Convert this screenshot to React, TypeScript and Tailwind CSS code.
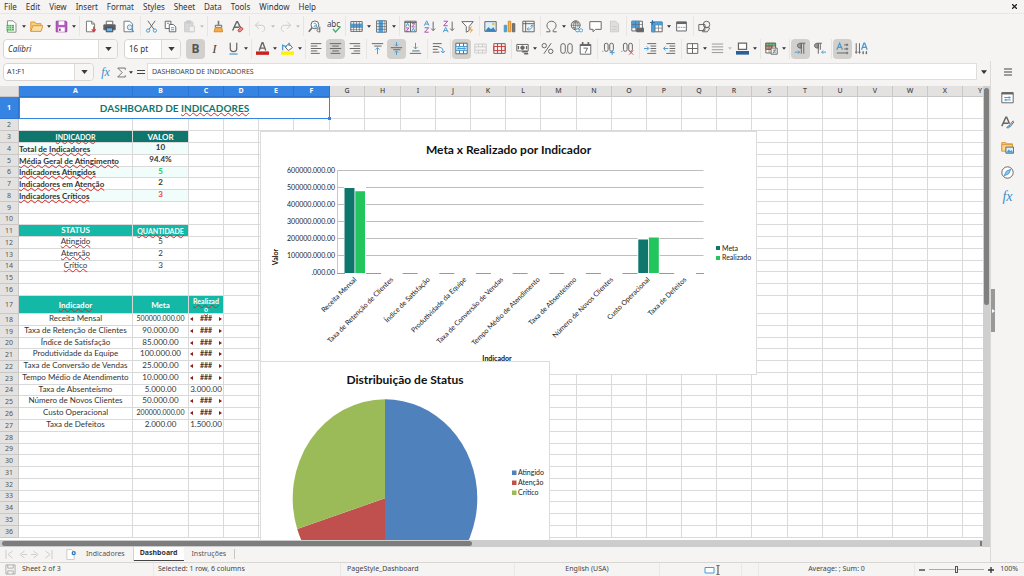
import React from "react";

type Kids = { children?: React.ReactNode };

/* ---------- shared palette for the icons ---------- */
const G = "#666666";
const B = "#4a9ad2";
const L = "#cccccc";

function Ic({ children }: Kids) {
  return (
    <svg viewBox="0 0 16 16" className="size-[13px] shrink-0" fill="none" stroke={G} strokeWidth="1.2" aria-hidden="true">
      {children}
    </svg>
  );
}

function Caret({ dim = false }: { dim?: boolean }) {
  return (
    <svg viewBox="0 0 6 4" className="h-[3px] w-1" aria-hidden="true">
      <path d="M0 0h6L3 4z" fill={dim ? "#c0c0c0" : "#333333"} />
    </svg>
  );
}

function Sep() {
  return (
    <div className="flex h-5 w-1 shrink-0 justify-center">
      <div className="w-px bg-[#e6e5e3]" />
    </div>
  );
}

type ToolProps = { label: string; on?: boolean; menu?: boolean; dim?: boolean; children: React.ReactNode };

function Tool({ label, on, menu, dim, children }: ToolProps) {
  return (
    <>
      <button
        type="button"
        aria-label={label}
        className={"flex h-5 w-[19px] shrink-0 items-center justify-center rounded-sm " + (on ? "bg-[#d2d0cc]" : "")}
      >
        {children}
      </button>
      {menu && (
        <button type="button" aria-label={label + " options"} className="flex h-5 w-1.5 shrink-0 items-center justify-center">
          <Caret dim={dim} />
        </button>
      )}
    </>
  );
}

function ComboButton({ label }: { label: string }) {
  return (
    <button type="button" aria-label={label} className="flex w-[19px] shrink-0 items-center justify-center border-l border-[#dddbd8] bg-[#f7f6f5]">
      <svg viewBox="0 0 8 5" className="h-1 w-[7px]" aria-hidden="true">
        <path d="M0 0h8L4 5z" fill="#3a3a3a" />
      </svg>
    </button>
  );
}

const sheetFrame = (c = G) => <path d="M2 2.5h12v11H2z" fill="#fff" stroke={c} />;

function MainToolbar() {
  return (
    <div role="toolbar" aria-label="Standard" className="flex h-6 shrink-0 items-center pl-0.5">
      <Tool label="New" menu>
        <Ic>
          <path d="M3 1h7l3.5 3.5V15H3z" fill="#fff" stroke="#8a8a8a" />
          <path d="M2 6h9v7H2z" fill="#3fae49" stroke="none" />
          <path d="M2 8.3h9M2 10.6h9M5 6v7M8 6v7" stroke="#d6f2d8" strokeWidth=".8" />
        </Ic>
      </Tool>
      <Tool label="Open" menu>
        <Ic>
          <path d="M1 14V2.5h5l1.5 2h6V7" fill="#f7cf83" stroke="#e0962f" />
          <path d="M1 14 3.5 7H16l-2.5 7z" fill="#fbdfa6" stroke="#e0962f" />
        </Ic>
      </Tool>
      <Tool label="Save" menu>
        <Ic>
          <path d="M1.5 1.5h12l1 1v12h-13z" fill="#b45cc4" stroke="#97409f" />
          <path d="M4.5 1.5h7V6h-7z" fill="#fff" stroke="none" />
          <path d="M4 9h8v5.5H4z" fill="#fff" stroke="none" />
          <path d="M6 10.5v3" stroke="#97409f" strokeWidth="2" />
        </Ic>
      </Tool>
      <Sep />
      <Tool label="Export as PDF">
        <Ic>
          <path d="M3 1.5h6.5l3.5 3.5v9.5H3z" fill="#fff" stroke="#777" />
          <path d="M9.5 1.5V5H13" stroke="#777" />
          <path d="M12 8v6m-2.5-2.5L12 14l2.5-2.5" stroke="#d23c3c" strokeWidth="1.5" />
        </Ic>
      </Tool>
      <Tool label="Print">
        <Ic>
          <path d="M4 1.5h8V6H4z" fill="#fff" />
          <path d="M1 6h14v6H1z" fill="#5a5f66" />
          <path d="M4 9.5h8v5H4z" fill="#6db3e6" stroke="#3c4650" />
        </Ic>
      </Tool>
      <Tool label="Print preview">
        <Ic>
          <path d="M2.5 1.5h7L13 5v9.5H2.5z" fill="#fff" stroke="#777" />
          <circle cx="9.5" cy="9" r="3" fill="#d9effc" stroke={B} />
          <path d="m11.5 11.5 3 3" stroke={B} strokeWidth="1.6" />
        </Ic>
      </Tool>
      <Sep />
      <Tool label="Cut">
        <Ic>
          <path d="M3.5 1 11 11.5M12.5 1 5 11.5" />
          <circle cx="3.8" cy="13" r="2" stroke={B} />
          <circle cx="12.2" cy="13" r="2" stroke={B} />
        </Ic>
      </Tool>
      <Tool label="Copy">
        <Ic>
          <path d="M1.5 1.5h7v9h-7z" fill="#fff" />
          <path d="M6.5 5.5h5l3 3v6h-8z" fill="#fff" />
          <path d="M8.5 9.5h4M8.5 12h4M3.5 4h3" stroke={B} />
        </Ic>
      </Tool>
      <Tool label="Paste" menu dim>
        <Ic>
          <path d="M2 2.5h10v12H2z" fill="#d8d8d8" stroke={L} />
          <path d="M4.5 1h5v3h-5z" fill={L} stroke={L} />
          <path d="M7.5 7.5H14v7H7.5z" fill="#f2f2f2" stroke={L} />
        </Ic>
      </Tool>
      <Sep />
      <Tool label="Clone formatting">
        <Ic>
          <path d="M8 1v5" stroke="#777" strokeWidth="2" />
          <path d="M4 6.5h8V9H4z" fill="#fff" />
          <path d="M4 9.5h8l1 5H2.5z" fill="#f3ae4c" stroke="#d8862a" />
        </Ic>
      </Tool>
      <Tool label="Clear formatting">
        <Ic>
          <path d="M2 13 7 2h1l4 8M4 9h6" strokeWidth="1.7" />
          <path d="m8.5 12.5 4-4 2.5 2.5-3.5 3.5h-2z" fill="#f28b8b" stroke="#d23c3c" />
        </Ic>
      </Tool>
      <Sep />
      <Tool label="Undo" menu dim>
        <Ic>
          <path d="M6 2 1.5 6.5 6 11M2 6.5h7c6 0 5 7 1 8" stroke={L} />
        </Ic>
      </Tool>
      <Tool label="Redo" menu dim>
        <Ic>
          <path d="m10 2 4.5 4.5L10 11M14 6.5H7c-6 0-5 7-1 8" stroke={L} />
        </Ic>
      </Tool>
      <Sep />
      <Tool label="Find and replace">
        <Ic>
          <circle cx="8.5" cy="6" r="4.8" fill="#fff" />
          <path d="m5 9.5-4 5" strokeWidth="1.8" />
          <path d="M7 4.5c3-1 3.5 0 3.5 4-4 1-4-2 0-2.2" stroke={B} />
          <path d="M14.5 8v7M14.5 11c-5-1-4.5 4.5 0 3.5" />
        </Ic>
      </Tool>
      <Tool label="Spelling">
        <span className="relative -mt-1 text-[8px] leading-[10px] text-[#444]">
          abc
          <svg viewBox="0 0 9 7" className="absolute -right-px -bottom-1 h-[7px] w-[9px]" aria-hidden="true">
            <path d="m1 3 2.5 3 5-5.5" fill="none" stroke="#3faf6a" strokeWidth="1.3" />
          </svg>
        </span>
      </Tool>
      <Sep />
      <Tool label="Row" menu>
        <Ic>
          <path d="M1 2h14v12H1z" fill="#fff" />
          <path d="M1 5h14v4H1z" fill="#4a9fdc" stroke={B} />
          <path d="M1 11.5h14M4.5 2v12M8 2v12M11.5 2v12" strokeWidth=".8" />
        </Ic>
      </Tool>
      <Tool label="Column" menu>
        <Ic>
          <path d="M2 1h12v14H2z" fill="#fff" />
          <path d="M5 1h4.5v14H5z" fill="#4a9fdc" stroke={B} />
          <path d="M2 4.5h12M2 8h12M2 11.5h12M12 1v14" strokeWidth=".8" />
        </Ic>
      </Tool>
      <Sep />
      <Tool label="Sort">
        <Ic>
          <path d="M1 1.5h14v13H1zM8 1.5v13M1 3h14" />
          <path d="m2.5 8 2-4 2 4M9.5 14l2-4 2 4" stroke={B} />
          <path d="M2.5 9.8H6L2.5 14H6M9.7 4.5h3.5l-3.5 4h3.5" stroke="#a64db5" />
        </Ic>
      </Tool>
      <Tool label="Sort ascending">
        <Ic>
          <path d="m1.5 7 3-6 3 6M2.5 5h4" stroke={B} />
          <path d="M2 9.5h5L2 15h5" stroke="#a64db5" />
          <path d="M12.5 2v11M10 10.5l2.5 2.5 2.5-2.5" />
        </Ic>
      </Tool>
      <Tool label="Sort descending">
        <Ic>
          <path d="M2 1.5h5L2 7h5" stroke="#a64db5" />
          <path d="m1.5 15 3-6 3 6M2.5 13h4" stroke={B} />
          <path d="M12.5 2v11M10 10.5l2.5 2.5 2.5-2.5" />
        </Ic>
      </Tool>
      <Tool label="AutoFilter">
        <Ic>
          <path d="M1 2h14l-5 6v5l-3.5 2V8z" fill="#fff" />
          <path d="m13 8-2.5 4H14l-2.5 3.5" stroke="#f0962a" />
        </Ic>
      </Tool>
      <Sep />
      <Tool label="Insert image">
        <Ic>
          <path d="M1 2h14v12H1z" fill="#d8effc" />
          <path d="m1.5 13.5 4-5 3 3 3-2.5 3 4.5z" fill="#3b83b8" stroke="none" />
          <circle cx="11.5" cy="5" r="1.6" fill="#f6b73c" stroke="none" />
        </Ic>
      </Tool>
      <Tool label="Insert chart">
        <Ic>
          <path d="M1.5 6.5h3v8h-3z" fill="#4a9fdc" stroke={B} />
          <path d="M6.5 1.5h3v13h-3z" fill="#f9b74a" stroke="#dc8b20" />
          <path d="M11.5 4.5h3v10h-3z" fill="#777" />
        </Ic>
      </Tool>
      <Tool label="Pivot table">
        <Ic>
          <path d="M1 1.5h14v13H1zM1 4.5h14M4.5 1.5v13" />
          <path d="M6.5 11c5 1 6-1 6-4.5M10.5 8l2-2 2 2M8.5 9l-2 2 2 2" stroke={B} />
        </Ic>
      </Tool>
      <Sep />
      <Tool label="Special character" menu>
        <Ic>
          <path d="M1.5 14.5H6v-2C0 9 2 1.5 8 1.5S16 9 10 12.5v2h4.5" />
        </Ic>
      </Tool>
      <Tool label="Hyperlink">
        <Ic>
          <circle cx="7" cy="6.5" r="5.5" />
          <path d="M1.5 6.5h11M7 1v11M3 3.5h8M3 9.5h4M7 1C3.5 4 3.5 9 7 12M7 1c3 2.5 3.5 5 2.5 8" strokeWidth=".9" />
          <rect x="7" y="11" width="4.5" height="3.5" rx="1.5" stroke={B} fill="#fff" />
          <rect x="11.5" y="11" width="4" height="3.5" rx="1.5" stroke={B} fill="#fff" />
        </Ic>
      </Tool>
      <Tool label="Comment">
        <Ic>
          <path d="M1 2h14v9.5H8L5 14.5v-3H1z" fill="#fff" />
        </Ic>
      </Tool>
      <Tool label="Headers and footers">
        <Ic>
          <path d="M3 1.5h6.5L13 5v9.5H3z" fill="#dedede" stroke={L} />
          <path d="M5 11.5h6M5 8h6" stroke={L} />
        </Ic>
      </Tool>
      <Sep />
      <Tool label="Define print area">
        <Ic>
          <path d="M1 1.5h13v12H1z" fill="#fff" />
          <path d="M1 1.5h9v8H1z" fill="#4a9fdc" stroke={B} />
          <path d="M1 5.5h13M5.5 1.5v12M10 1.5v8" strokeWidth=".8" />
          <path d="M7 10h8.5v4.5H7z" fill="#666" />
        </Ic>
      </Tool>
      <Tool label="Freeze rows and columns" menu>
        <Ic>
          <path d="M2 2.5h13v12H2z" fill="#fff" />
          <path d="M2 2.5h13V6H6v8.5H2z" fill="#4a9fdc" stroke={B} />
          <path d="M6 6v8.5M10.5 6v8.5M6 10h9" strokeWidth=".8" />
          <path d="M3 0v6M0 3h6" stroke="#2f6ea3" />
        </Ic>
      </Tool>
      <Tool label="Split window">
        <Ic>
          {sheetFrame()}
          <path d="M2 3.5h12" strokeWidth="3" />
          <path d="M1 9h14" stroke={B} strokeDasharray="2 1" />
        </Ic>
      </Tool>
      <Sep />
      <Tool label="Show draw functions">
        <Ic>
          <path d="M1 5.5h7.5V13H1z" />
          <circle cx="10.5" cy="5.5" r="4" />
          <path d="m5.5 14.5 3-6 6 1.5-3 4.5z" />
        </Ic>
      </Tool>
    </div>
  );
}

function AlignLines({ x }: { x: [number, number][] }) {
  return (
    <Ic>
      {x.map(([a, b], i) => (
        <path key={i} d={`M${a} ${2 + i * 3}H${b}`} />
      ))}
    </Ic>
  );
}

function FormatToolbar() {
  return (
    <div role="toolbar" aria-label="Formatting" className="mb-0.5 flex h-[21px] shrink-0 items-center pl-[3px]">
      <div className="mr-1.5 flex h-5 w-[115px] overflow-hidden rounded-sm border border-[#d8d6d3] bg-white">
        <input aria-label="Font name" defaultValue="Calibri" className="w-full min-w-0 bg-transparent pl-1 text-[8px] text-[#333] italic outline-none" />
        <ComboButton label="Font list" />
      </div>
      <div className="mr-[5px] flex h-5 w-[57px] overflow-hidden rounded-sm border border-[#d8d6d3] bg-white">
        <input aria-label="Font size" defaultValue="16 pt" className="w-full min-w-0 bg-transparent pl-1 text-[8px] text-[#333] outline-none" />
        <ComboButton label="Font size list" />
      </div>
      <Tool label="Bold" on>
        <span className="text-[12px] leading-none font-bold text-[#555]">B</span>
      </Tool>
      <Tool label="Italic">
        <span className="font-['Liberation_Serif',serif] text-[13px] leading-none text-[#444] italic">I</span>
      </Tool>
      <Tool label="Underline" menu>
        <Ic>
          <path d="M4 1v7c0 5 8 5 8 0V1" strokeWidth="1.5" />
          <path d="M3 14.8h10" stroke={B} strokeWidth="1.5" />
        </Ic>
      </Tool>
      <Sep />
      <Tool label="Font color" menu>
        <Ic>
          <path d="M4 10.5 7.5 1h1L12 10.5M5.5 7.5h5" strokeWidth="1.7" />
          <path d="M0 13.7h16" stroke="#c9211e" strokeWidth="4.2" />
        </Ic>
      </Tool>
      <Tool label="Highlighting" menu>
        <Ic>
          <path d="m5 6 5-4 4 5-5 3.5z" fill="#fff" />
          <path d="M2 10V4l5 2M10 1v4" stroke={B} strokeWidth="1.6" />
          <path d="M0 13.7h16" stroke="#fff200" strokeWidth="4.2" />
        </Ic>
      </Tool>
      <Sep />
      <Tool label="Align left">
        <AlignLines x={[[1, 14], [1, 9], [1, 14], [1, 9], [1, 12]]} />
      </Tool>
      <Tool label="Align center" on>
        <AlignLines x={[[1, 15], [4, 12], [1, 15], [4, 12], [2, 14]]} />
      </Tool>
      <Tool label="Align right">
        <AlignLines x={[[2, 15], [7, 15], [2, 15], [7, 15], [4, 15]]} />
      </Tool>
      <Sep />
      <Tool label="Align top">
        <Ic>
          <path d="M1 2h14M4 5h9" />
          <path d="M8 15V7M5.5 9.5 8 7l2.5 2.5" stroke={B} />
        </Ic>
      </Tool>
      <Tool label="Center vertically" on>
        <Ic>
          <path d="M1 7h14M4 9.5h9" />
          <path d="M8 0v5M6 3l2 2 2-2M8 16v-5M6 13l2-2 2 2" stroke={B} />
        </Ic>
      </Tool>
      <Tool label="Align bottom">
        <Ic>
          <path d="M1 14h14M4 11h9" />
          <path d="M8 1v7.5M5.5 6 8 8.5 10.5 6" stroke={B} />
        </Ic>
      </Tool>
      <Sep />
      <Tool label="Wrap text">
        <Ic>
          <path d="M1 2h11M1 5.5h8M1 9h6M1 12.5h8" />
          <path d="M8 6.5c5 0 5.5 2 5.5 6.5M11 11l2.5 2.5L16 11" stroke={B} />
        </Ic>
      </Tool>
      <Sep />
      <Tool label="Merge and center" on>
        <Ic>
          <path d="M1 1.5h14v13H1zM5.5 1.5v4M10.5 1.5v4M5.5 10.5v4M10.5 10.5v4" fill="#fff" />
          <path d="M1 5.5h14v5H1z" fill="#cfe8fa" stroke={B} />
          <path d="M3 8h10M5 6.5 3.5 8 5 9.5M11 6.5 12.5 8 11 9.5" stroke={B} />
        </Ic>
      </Tool>
      <Tool label="Merge cells">
        <Ic>
          <path d="M1 2.5h14v11H1zM1 6h14M1 10h14M5.5 2.5V6M10.5 2.5V6M5.5 10v3.5M10.5 10v3.5" stroke={L} />
        </Ic>
      </Tool>
      <Tool label="Unmerge cells">
        <Ic>
          <path d="M1 2h14v12H1zM5.5 2v3M10.5 2v3M5.5 11v3M10.5 11v3" />
          <path d="M1 5.5h14v5H1zM5.5 5v6M10.5 5v6" stroke="#d23c3c" />
        </Ic>
      </Tool>
      <Sep />
      <Tool label="Format as currency" menu>
        <Ic>
          <path d="M1 3h14v8H1z" fill="#fff" />
          <circle cx="8" cy="7" r="2.2" fill={G} />
          <path d="M7.5 12h7M10 14.5h5M3 5v4M13 5v4" strokeWidth="1.7" />
        </Ic>
      </Tool>
      <Tool label="Format as percent">
        <Ic>
          <circle cx="4" cy="4.5" r="2.7" />
          <circle cx="12" cy="11.5" r="2.7" />
          <path d="M12.5 1.5 3.5 14.5" />
        </Ic>
      </Tool>
      <Tool label="Format as number">
        <Ic>
          <rect x="1" y="2" width="5.5" height="12" rx="2.75" />
          <rect x="9.5" y="2" width="5.5" height="12" rx="2.75" />
          <path d="M7.4 13.5h1.2" />
        </Ic>
      </Tool>
      <Tool label="Format as date">
        <Ic>
          <path d="M1.5 3h13v12h-13z" fill="#fff" />
          <path d="M1.5 4h13M4.5 0v4M11.5 0v4" strokeWidth="2" />
          <path d="M5.5 7.5h5l-3 6" />
        </Ic>
      </Tool>
      <Sep />
      <Tool label="Add decimal place">
        <Ic>
          <path d="M.5 11.5h1" />
          <rect x="3" y="1.5" width="4.5" height="10" rx="2.2" />
          <rect x="9.5" y="1.5" width="4.5" height="10" rx="2.2" />
          <path d="M12.5 10v6M9.5 13h6" stroke={B} />
        </Ic>
      </Tool>
      <Tool label="Delete decimal place">
        <Ic>
          <path d="M.5 11.5h1" />
          <rect x="3" y="1.5" width="4.5" height="10" rx="2.2" />
          <rect x="9.5" y="1.5" width="4.5" height="10" rx="2.2" />
          <path d="m10 10.5 5 5m0-5-5 5" stroke="#e04545" />
        </Ic>
      </Tool>
      <Sep />
      <Tool label="Increase indent">
        <Ic>
          <path d="M4 2h11M8 5h7M8 8h7M8 11h7M4 14h11" />
          <path d="M0 8h5.5M3.5 5.5 6 8l-2.5 2.5" stroke={B} />
        </Ic>
      </Tool>
      <Tool label="Decrease indent">
        <Ic>
          <path d="M4 2h11M8 5h7M8 8h7M8 11h7M4 14h11" />
          <path d="M6.5 8H1M3 5.5.5 8 3 10.5" stroke={B} />
        </Ic>
      </Tool>
      <Sep />
      <Tool label="Borders" menu>
        <Ic>
          <path d="M1.5 2h13v12h-13z" fill="#fff" />
          <path d="M8 2v12M1.5 8h13" />
        </Ic>
      </Tool>
      <Tool label="Border style" menu dim>
        <Ic>
          <path d="M1 2.5h14M1 6h14M1 9.5h14M1 13h14" stroke="#999" />
        </Ic>
      </Tool>
      <Tool label="Border color" menu>
        <Ic>
          <path d="M3 1.5h10V9H3z" fill="#fff" strokeWidth="1.5" />
          <path d="M0 13.3h16" stroke="#2a6099" strokeWidth="4.5" />
        </Ic>
      </Tool>
      <Sep />
      <Tool label="Conditional formatting" menu>
        <Ic>
          <path d="M1 1.5h12v12H1z" fill="#fff" />
          <path d="M1 1.5h12V5H1z" fill="#6cc070" />
          <path d="M1 5h7v4H1z" fill="#ef8a5c" />
          <path d="M5 1.5v12M9 1.5v12M1 9h12" strokeWidth=".8" />
          <path d="M7.5 7.5H15V15H7.5z" fill="#fff" />
          <path d="M9.5 10h4M9.5 12.5h4M13 9l-3 5" strokeWidth=".9" />
        </Ic>
      </Tool>
      <Sep />
      <Tool label="Left-to-right" on>
        <Ic>
          <path d="M14 1.5H8c-5 0-5 6 0 6h1v-6" fill="#999" />
          <path d="M9 1.5v13M12 1.5v13" />
          <path d="M1 12.5h6M5 10.5l2 2-2 2" stroke={B} />
        </Ic>
      </Tool>
      <Tool label="Right-to-left">
        <Ic>
          <path d="M11 1.5H5.5c-5 0-5 6 0 6h1v-6" fill="#999" />
          <path d="M6.5 1.5v13M9 1.5v8" />
          <path d="M16 12.5h-5M12.5 10.5l-2 2 2 2" stroke={B} />
        </Ic>
      </Tool>
      <Sep />
      <Tool label="Text direction left to right" on>
        <Ic>
          <path d="m1 9.5 3.5-8 3.5 8M2.5 6.5h4" stroke={B} strokeWidth="1.5" />
          <path d="M10 3.5h5M10 8.5h5M1 13.5h14M13.5 2v3M13.5 7v3M13.5 12v3" />
        </Ic>
      </Tool>
      <Tool label="Text direction top to bottom">
        <Ic>
          <path d="M1.5 1.5v13M5.5 1.5v13M0 12.5h3M4 12.5h3" />
          <path d="m8 9.5 3-8h1l3 8M9.5 6.5H14" stroke={B} strokeWidth="1.5" />
          <path d="M10 11v4M14 11v4M9 13.5h2M13 13.5h2" />
        </Ic>
      </Tool>
    </div>
  );
}

function FormulaBar() {
  return (
    <div className="flex h-[25px] shrink-0 items-start pt-0.5 pl-[3px]">
      <div className="flex h-[18px] w-[91px] shrink-0 overflow-hidden rounded-sm border border-[#d8d6d3] bg-white">
        <input aria-label="Name box" defaultValue="A1:F1" className="w-full min-w-0 bg-transparent pl-[3px] text-[7px] text-[#333] outline-none" />
        <ComboButton label="Named ranges" />
      </div>
      <div className="ml-0.5 flex h-[18px] items-center">
        <Tool label="Function wizard">
          <span className="font-['Liberation_Serif',serif] text-[12px] leading-none text-[#3b8ec8] italic">fx</span>
        </Tool>
        <button type="button" aria-label="Select function" className="flex w-3 items-center justify-center">
          <svg viewBox="0 0 16 16" className="size-[11px]" fill="none" stroke={G} strokeWidth="1.3" aria-hidden="true">
            <path d="M13.5 4V1.5h-11L9 8l-6.5 6.5h11V12" />
          </svg>
        </button>
        <button type="button" aria-label="Functions" className="flex w-[7px] items-center justify-center">
          <Caret />
        </button>
        <button type="button" aria-label="Formula" className="flex w-[13px] items-center justify-center">
          <svg viewBox="0 0 8 8" className="size-2" aria-hidden="true">
            <path d="M0 2.5h8M0 5.5h8" stroke="#444" />
          </svg>
        </button>
      </div>
      <input
        aria-label="Input line"
        defaultValue="DASHBOARD DE INDICADORES"
        className="h-[17px] min-w-0 flex-1 border border-[#e0dedc] bg-white pl-1 text-[7px] text-[#444] outline-none"
      />
      <button type="button" aria-label="Expand formula bar" className="flex h-[17px] w-[13px] items-center justify-center">
        <svg viewBox="0 0 8 5" className="h-1 w-1.5" aria-hidden="true">
          <path d="M0 0h8L4 5z" fill="#333" />
        </svg>
      </button>
    </div>
  );
}

/* ---------- sheet ---------- */
const letters = "ABCDEFGHIJKLMNOPQRSTUVWXY".split("");
const colWidth: Record<string, string> = { A: "w-[114px]", B: "w-[56px]", F: "w-9", H: "w-9", M: "w-9", S: "w-9" };
const shortRows = [6, 10, 14, 20, 24, 29, 33];

function rowHeight(n: number) {
  if (n === 1) return "h-[22px]";
  if (n === 17) return "h-[18px]";
  return shortRows.includes(n) ? "h-[11px]" : "h-3";
}

const S = ({ children }: Kids) => (
  <span className="underline decoration-[#dc2626] decoration-wavy decoration-1 underline-offset-0 [text-decoration-skip-ink:none]">{children}</span>
);

const dark = "bg-[#0f766e] text-white text-center font-bold leading-[10px]";
const teal = "bg-[#14b8a6] text-white text-center font-bold";
const label = "font-bold text-[8px] leading-[10px] text-[#333]";
const value = "align-top text-center font-bold text-[8px] leading-[9px]";
const body = "align-top text-center text-[8px] leading-[9px] text-[#333]";
const wide = "align-top text-center text-[7px] leading-[9px] text-[#333]";
const ink = " text-[#333]";
const mint = " bg-[#f0fdfa]";

type Cell = { c: React.ReactNode; k: string };
const Over = () => (
  <span className="flex items-center justify-between px-px">
    <svg viewBox="0 0 3 4" className="h-1 w-[3px]" aria-hidden="true"><path d="M3 0v4L0 2z" fill="#8b1a1a" /></svg>
    <span className="text-[7px] font-bold">###</span>
    <svg viewBox="0 0 3 4" className="h-1 w-[3px]" aria-hidden="true"><path d="M0 0v4l3-2z" fill="#8b1a1a" /></svg>
  </span>
);

const data: [string, string, string | null][] = [
  ["Receita Mensal", "500000.000.00", null],
  ["Taxa de Retenção de Clientes", "90.000.00", null],
  ["Índice de Satisfação", "85.000.00", null],
  ["Produtividade da Equipe", "100.000.00", null],
  ["Taxa de Conversão de Vendas", "25.000.00", null],
  ["Tempo Médio de Atendimento", "10.000.00", null],
  ["Taxa de Absenteísmo", "5.000.00", "3.000.00"],
  ["Número de Novos Clientes", "50.000.00", null],
  ["Custo Operacional", "200000.000.00", null],
  ["Taxa de Defeitos", "2.000.00", "1.500.00"],
];

const cells: Record<number, Cell[]> = {
  3: [{ c: <S>INDICADOR</S>, k: dark + " text-[7px]" }, { c: "VALOR", k: dark + " text-[8px]" }],
  4: [{ c: <>Total <S>de Indicadores</S></>, k: label + mint }, { c: "10", k: value + ink + mint }],
  5: [{ c: <S>Média Geral de Atingimento</S>, k: label }, { c: "94.4%", k: value + ink }],
  6: [{ c: <S>Indicadores Atingidos</S>, k: label + mint }, { c: "5", k: value + " text-[#22c55e]" + mint }],
  7: [{ c: <><S>Indicadores</S> em <S>Atenção</S></>, k: label }, { c: "2", k: value + ink }],
  8: [{ c: <S>Indicadores Críticos</S>, k: label + mint }, { c: "3", k: value + " text-[#ef4444]" + mint }],
  11: [{ c: "STATUS", k: teal + " align-top text-[8px] leading-[10px]" }, { c: <S>QUANTIDADE</S>, k: teal + " text-[7px] leading-[10px]" }],
  12: [{ c: <S>Atingido</S>, k: body }, { c: "5", k: body }],
  13: [{ c: <S>Atenção</S>, k: body }, { c: "2", k: body }],
  14: [{ c: <S>Crítico</S>, k: body }, { c: "3", k: body }],
  17: [
    { c: <S>Indicador</S>, k: teal + " text-[8px] leading-[10px]" },
    { c: "Meta", k: teal + " text-[8px] leading-[10px]" },
    { c: <S>Realizad<br />o</S>, k: teal + " text-[7px] leading-[8px]" },
  ],
};
data.forEach(([a, b, c], i) => {
  cells[18 + i] = [
    { c: a, k: body },
    { c: b, k: b.length > 11 ? wide : body },
    { c: c ?? <Over />, k: body },
  ];
});

function Sheet() {
  const rows = Array.from({ length: 36 }, (_, i) => i + 1);
  return (
    <table className="w-max table-fixed border-separate border-spacing-0 font-['Lato',sans-serif]">
      <colgroup>
        <col className="w-[19px]" />
        {letters.map((l) => (
          <col key={l} className={colWidth[l] ?? "w-[35px]"} />
        ))}
      </colgroup>
      <thead>
        <tr className="h-[11px] font-['Noto_Sans',sans-serif] text-[7px] leading-[10px]">
          <td className="border-r border-b border-[#c9c8c6] bg-[#e3e2e0] p-0" />
          {letters.map((l, i) => (
            <th
              key={l}
              scope="col"
              className={
                "border-r border-b p-0 " +
                (i < 6 ? "border-[#2b74cf] bg-[#3584e4] font-bold text-white" : "border-[#c9c8c6] bg-[#e3e2e0] font-medium text-[#444]")
              }
            >
              {l}
            </th>
          ))}
        </tr>
      </thead>
      <tbody>
        {rows.map((n) => {
          const own = cells[n] ?? [];
          const rest = n === 1 ? letters.slice(6) : letters.slice(own.length);
          return (
            <tr key={n} className={rowHeight(n)}>
              <th
                scope="row"
                className={
                  "border-r border-b p-0 font-['Noto_Sans',sans-serif] text-[7px] leading-[10px] " +
                  (n === 1 ? "border-[#2b74cf] bg-[#3584e4] font-bold text-white" : "border-[#c9c8c6] bg-[#e3e2e0] font-normal text-[#555]")
                }
              >
                {n}
              </th>
              {n === 1 && (
                <td colSpan={6} className="relative border border-[#3584e4] p-0 text-center text-[10px] leading-none font-bold text-[#0f766e]">
                  DASHBOARD DE <S>INDICADORES</S>
                  <span className="absolute -right-0.5 -bottom-0.5 size-[3px] bg-[#3584e4]" />
                </td>
              )}
              {own.map((cell, i) => (
                <td key={i} className={"border-r border-b border-[#d9d9d9] p-0 whitespace-nowrap " + cell.k}>
                  {cell.c}
                </td>
              ))}
              {rest.map((l) => (
                <td key={l} className="border-r border-b border-[#dadada] p-0" />
              ))}
            </tr>
          );
        })}
      </tbody>
    </table>
  );
}

/* ---------- charts ---------- */
const ticks = ["600000.000.00", "500000.000.00", "400000.000.00", "300000.000.00", "200000.000.00", "100000.000.00", ".000.00"];

function BarChart() {
  const step = 36.65;
  return (
    <svg
      viewBox="260 131 497 244"
      className="absolute top-[45px] left-[260px] h-[244px] w-[497px] font-['Lato',sans-serif]"
      role="img"
      aria-label="Meta x Realizado por Indicador"
    >
      <rect x="260.5" y="131.5" width="496" height="243" fill="#fff" stroke="#dcdcdc" />
      <text x="508.5" y="154" textAnchor="middle" fontSize="12" fontWeight="700" fill="#111">Meta x Realizado por Indicador</text>
      {ticks.map((t, i) => (
        <g key={t}>
          <text x="335" y={172.5 + i * 17.07} textAnchor="end" fontSize="7" fill="#222">{t}</text>
          {i < 6 && <path d={`M337 ${170.5 + Math.round(i * 17.07)}H703.5`} stroke="#bdbdbd" />}
        </g>
      ))}
      <path d="M337.5 170v103" stroke="#c8c8c8" />
      <path d="M337 273.5h8" stroke="#999" />
      {data.map((d, i) => (
        <g key={d[0]}>
          <path d={i === 9 ? "M696 273.5h8" : `M${366 + i * step} 273.5h15`} stroke="#999" />
          <text transform={`translate(${357 + i * step} 280) rotate(-45)`} textAnchor="end" fontSize="7" fill="#222">
            {d[0]}
          </text>
        </g>
      ))}
      <path d="M344 187h22v86h-22zM637.5 236.5h22V273h-22z" fill="#fff" />
      <path d="M344.5 188H354.5v85H344.5zM638.3 239.5h9.7V273h-9.7z" fill="#0f766e" />
      <path d="M355.3 191.3H365V273h-9.7zM648.8 237.5h10V273h-10z" fill="#22c55e" />
      <text transform="translate(277.5 257) rotate(-90)" textAnchor="middle" fontSize="7" fontWeight="700" fill="#111">Valor</text>
      <text x="497" y="361" textAnchor="middle" fontSize="7" fontWeight="700" fill="#111">Indicador</text>
      <rect x="716" y="246" width="4" height="4" fill="#0f766e" />
      <rect x="716" y="256" width="4" height="4" fill="#22c55e" />
      <text x="722" y="250.5" fontSize="7" fill="#222">Meta</text>
      <text x="722" y="260" fontSize="7" fill="#222">Realizado</text>
    </svg>
  );
}

function PieChart() {
  const legend: [string, string][] = [["Atingido", "#4f81bd"], ["Atenção", "#c0504d"], ["Crítico", "#9bbb59"]];
  return (
    <svg
      viewBox="260 361 290 244"
      className="absolute top-[275px] left-[260px] h-[244px] w-[290px] font-['Lato',sans-serif]"
      role="img"
      aria-label="Distribuição de Status"
    >
      <rect x="260.5" y="361.5" width="289" height="243" fill="#fff" stroke="#dcdcdc" />
      <text x="405" y="383.5" textAnchor="middle" fontSize="12" fontWeight="700" fill="#111">Distribuição de Status</text>
      <path d="M385 498.3V399.3A92.3 99 0 0 1 385 597.3z" fill="#4f81bd" />
      <path d="M385 498.3V597.3A92.3 99 0 0 1 297.2 528.9z" fill="#c0504d" />
      <path d="M385 498.3 297.2 528.9A92.3 99 0 0 1 385 399.3z" fill="#9bbb59" />
      {legend.map(([t, c], i) => (
        <g key={t}>
          <rect x="512" y={470.5 + i * 10} width="4.5" height="4.5" fill={c} />
          <text x="518" y={475 + i * 10} fontSize="7" fill="#222">{t}</text>
        </g>
      ))}
    </svg>
  );
}

/* ---------- side bar, tabs, status ---------- */
function SideBar() {
  const item = "flex size-5 items-center justify-center";
  return (
    <aside className="flex w-[34px] shrink-0 border-l border-[#dcdad7]">
      <button type="button" aria-label="Collapse sidebar" className="mt-[228px] flex h-[43px] w-1 items-center justify-center bg-[#999]">
        <svg viewBox="0 0 3 4" className="h-1 w-[3px]" aria-hidden="true"><path d="M0 0v4l3-2z" fill="#fff" /></svg>
      </button>
      <div className="flex flex-1 flex-col items-center gap-[5px] pt-px pr-1">
        <button type="button" aria-label="Sidebar settings" className={item}>
          <svg viewBox="0 0 8 8" className="size-2" aria-hidden="true"><path d="M0 1h8M0 4h8M0 7h8" stroke="#444" strokeWidth="1.2" /></svg>
        </button>
        <button type="button" aria-label="Properties" className={item}>
          <Ic>
            <path d="M1 2h14v12.5H1z" fill="#fff" />
            <path d="M1 3h14" strokeWidth="2.5" />
            <path d="M4 8h8M4 11h8M10 6.5v3M6 9.5v3" stroke={B} />
          </Ic>
        </button>
        <button type="button" aria-label="Styles" className={item}>
          <Ic>
            <path d="M1 12.5 6 1.5h1l3.5 8M3 9h6" strokeWidth="1.8" />
            <path d="m10 12 5-6 1 1-4.5 6z" />
            <path d="M7 14.5c3 .5 4-.5 4-2.5-2-.5-3 .5-4 2.5z" fill="#6db3e6" stroke={B} />
          </Ic>
        </button>
        <button type="button" aria-label="Gallery" className={item}>
          <Ic>
            <path d="M1 12.5V2h5l1 1.5h7V7" fill="#f8c873" stroke="#e0962f" />
            <path d="M1 4.5h13v8H1z" fill="#fbd995" stroke="#e0962f" />
            <path d="M6 7.5h9.5V15H6z" fill="#d8effc" />
            <path d="m6.5 14.5 3-4 2 2 1.5-1.5 2 3.5z" fill={B} stroke="none" />
          </Ic>
        </button>
        <button type="button" aria-label="Navigator" className={item}>
          <Ic>
            <circle cx="8" cy="8" r="7" fill="#fff" />
            <path d="M12 4 9.5 9.5 4 12l2.5-5.5z" fill="#8cc7f0" stroke={B} />
          </Ic>
        </button>
        <button type="button" aria-label="Functions" className={item + " font-['Liberation_Serif',serif] text-[14px] leading-none text-[#3b8ec8] italic"}>
          fx
        </button>
      </div>
    </aside>
  );
}

function Tabs() {
  return (
    <div className="flex h-[15px] shrink-0 items-stretch pb-px text-[7px] text-[#555]">
      <div className="flex w-[62px] items-center gap-1 pl-[5px]">
        {["First sheet", "Previous sheet", "Next sheet", "Last sheet"].map((t, i) => (
          <button key={t} type="button" aria-label={t} className="size-[9px]">
            <svg viewBox="0 0 9 9" fill="none" stroke="#cfcdca" aria-hidden="true">
              {i === 0 && <path d="M1 0v9M7.5 1 3 4.5 7.5 8" />}
              {i === 1 && <path d="M6.5 1 2 4.5 6.5 8M4 4.5h5" />}
              {i === 2 && <path d="M2.5 1 7 4.5 2.5 8M0 4.5h5" />}
              {i === 3 && <path d="M8 0v9M1.5 1 6 4.5 1.5 8" />}
            </svg>
          </button>
        ))}
      </div>
      <button type="button" aria-label="Add sheet" className="flex w-4 items-center justify-center">
        <svg viewBox="0 0 12 12" className="size-[11px]" fill="none" aria-hidden="true">
          <path d="M2 .5h5l3 3v8H2z" fill="#fff" stroke="#c8c8c8" />
          <circle cx="9.5" cy="4.5" r="1.6" fill="#fff" stroke="#2f77b8" strokeWidth="1.5" />
        </svg>
      </button>
      <button type="button" className="border-r border-[#d4d2cf] px-2">Indicadores</button>
      <button type="button" className="border-b border-[#444] bg-white px-1.5 font-bold text-[#333]">Dashboard</button>
      <button type="button" className="my-0.5 border-r border-[#c8c6c3] px-2">Instruções</button>
    </div>
  );
}

function StatusBar() {
  const part = "flex items-center border-r border-[#eae8e6] whitespace-nowrap";
  return (
    <footer className="grid h-3.5 shrink-0 grid-cols-[154fr_187fr_174fr_145fr_82fr_17fr_156fr_109fr] border-t border-[#d9d7d4] text-[7px] text-[#444]">
      <div className={part + " gap-1.5 pl-[5px]"}>
        <svg viewBox="0 0 12 12" className="size-[11px]" fill="none" stroke="#aaa" aria-hidden="true">
          <path d="M1 1h10v10H1zM3 1v3.5h6V1M3 11V7.5h6V11" />
        </svg>
        Sheet 2 of 3
      </div>
      <div className={part + " pl-1"}>Selected: 1 row, 6 columns</div>
      <div className={part + " pl-1.5"}>PageStyle_Dashboard</div>
      <div className={part + " justify-center"}>English (USA)</div>
      <div className={part + " justify-center pl-6"}>
        <svg viewBox="0 0 17 10" className="h-2.5 w-[17px]" fill="none" aria-hidden="true">
          <path d="M1 2.5h9V8H1z" stroke={B} fill="#fff" />
          <path d="M12.5 .5h1l.5.5.5-.5h1M14 1v8M12.5 9.5h1l.5-.5.5.5h1" stroke="#444" />
        </svg>
      </div>
      <div className={part} />
      <div className={part + " justify-center"}>Average: ; Sum: 0</div>
      <div className="flex items-center gap-1 pr-1.5 pl-1">
        <button type="button" aria-label="Zoom out" className="flex size-1.5 items-center">
          <svg viewBox="0 0 6 6" className="size-1.5" aria-hidden="true"><path d="M0 3h6" stroke="#333" strokeWidth="1.3" /></svg>
        </button>
        <input
          type="range"
          aria-label="Zoom"
          defaultValue={50}
          className="h-2 w-0 flex-1 appearance-none bg-[linear-gradient(#aaa,#aaa)] bg-[length:100%_1px] bg-center bg-no-repeat [&::-webkit-slider-thumb]:h-[7px] [&::-webkit-slider-thumb]:w-[3px] [&::-webkit-slider-thumb]:appearance-none [&::-webkit-slider-thumb]:border [&::-webkit-slider-thumb]:border-[#555] [&::-webkit-slider-thumb]:bg-[#eee]"
        />
        <button type="button" aria-label="Zoom in" className="flex size-1.5 items-center">
          <svg viewBox="0 0 6 6" className="size-1.5" aria-hidden="true"><path d="M0 3h6M3 0v6" stroke="#333" strokeWidth="1.3" /></svg>
        </button>
        <span className="pl-0.5">100%</span>
      </div>
    </footer>
  );
}

const menus = ["File", "Edit", "View", "Insert", "Format", "Styles", "Sheet", "Data", "Tools", "Window", "Help"];

export default function App() {
  return (
    <div className="flex h-screen flex-col overflow-hidden bg-[#f5f4f3] font-['Noto_Sans',sans-serif] text-[#333]">
      <nav aria-label="Menu" className="flex h-3.5 shrink-0 items-center gap-[9px] border-b border-[#e9e7e5] pr-[7px] pl-1 text-[8px] leading-[13px]">
        {menus.map((m) => (
          <button key={m} type="button">{m}</button>
        ))}
        <button type="button" aria-label="Close" className="ml-auto">
          <svg viewBox="0 0 6 6" className="size-[5px]" aria-hidden="true"><path d="m0 0 6 6m0-6L0 6" stroke="#222" strokeWidth="1.5" /></svg>
        </button>
      </nav>
      <MainToolbar />
      <FormatToolbar />
      <div className="flex min-h-0 flex-1">
        <main className="flex min-w-0 flex-1 flex-col">
          <FormulaBar />
          <div className="flex min-h-0 flex-1">
            <div className="relative min-w-0 flex-1 overflow-hidden bg-white">
              <Sheet />
              <BarChart />
              <PieChart />
            </div>
            <div className="w-[7px] shrink-0 bg-[#cfcfcf] px-px pt-0.5">
              <div className="h-[48%] rounded-sm bg-[#7f7f7f]" />
            </div>
          </div>
          <div className="flex h-[7px] shrink-0 justify-between bg-[#cdcdcd] pt-px pr-2 pb-px pl-0.5">
            <div className="w-[48%] rounded-sm bg-[#7d7d7d]" />
            <div className="w-0.5 bg-[#777]" />
          </div>
          <Tabs />
        </main>
        <SideBar />
      </div>
      <StatusBar />
    </div>
  );
}
